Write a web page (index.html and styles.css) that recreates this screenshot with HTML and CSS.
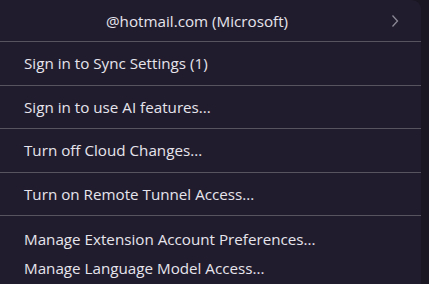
FILE: index.html
```html
<!DOCTYPE html>
<html lang="en">
<head>
  <meta charset="UTF-8">
  <title>Accounts Menu</title>
  <link rel="stylesheet" href="styles.css">
</head>
<body>
  <!-- Accounts menu -->
  <div class="menu">
    <div class="menu-head">
      <span class="account-name">@hotmail.com (Microsoft)</span>
      <svg class="chevron" viewBox="0 0 16 16" fill="none"><path d="M5.5 2.5 L10.5 8 L5.5 13.5" stroke="currentColor" stroke-width="1.3"/></svg>
    </div>
    <div class="menu-item">Sign in to Sync Settings (1)</div>
    <div class="menu-item">Sign in to use AI features...</div>
    <div class="menu-item">Turn off Cloud Changes...</div>
    <div class="menu-item">Turn on Remote Tunnel Access...</div>
    <div class="menu-group">
      <div class="menu-link">Manage Extension Account Preferences...</div>
      <div class="menu-link">Manage Language Model Access...</div>
    </div>
  </div>
</body>
</html>
```
FILE: styles.css
```css
html, body {
  margin: 0;
  padding: 0;
  height: 100%;
}
body {
  background: #1a1723;
  font-family: 'Open Sans', 'Noto Sans', sans-serif;
  font-size: 15.2px;
  color: #e6e4ec;
  overflow: hidden;
}
.menu {
  width: 421px;
  height: 100%;
  background: #211c2d;
  border-radius: 0 9px 0 0;
  display: flex;
  flex-direction: column;
  overflow: hidden;
}
.menu-head {
  flex: none;
  height: 41px;
  border-bottom: 1px solid #57535f;
  display: flex;
  align-items: center;
}
.account-name {
  margin-left: 106px;
  flex: 1;
}
.chevron {
  width: 16px;
  height: 16px;
  margin-right: 18px;
  color: #8b8895;
}
.menu-item {
  flex: none;
  height: 42.5px;
  border-bottom: 1px solid #57535f;
  display: flex;
  align-items: center;
  padding-left: 24px;
}
.menu-group {
  padding-top: 8px;
}
.menu-link {
  height: 29px;
  display: flex;
  align-items: center;
  padding-left: 24px;
}
```
